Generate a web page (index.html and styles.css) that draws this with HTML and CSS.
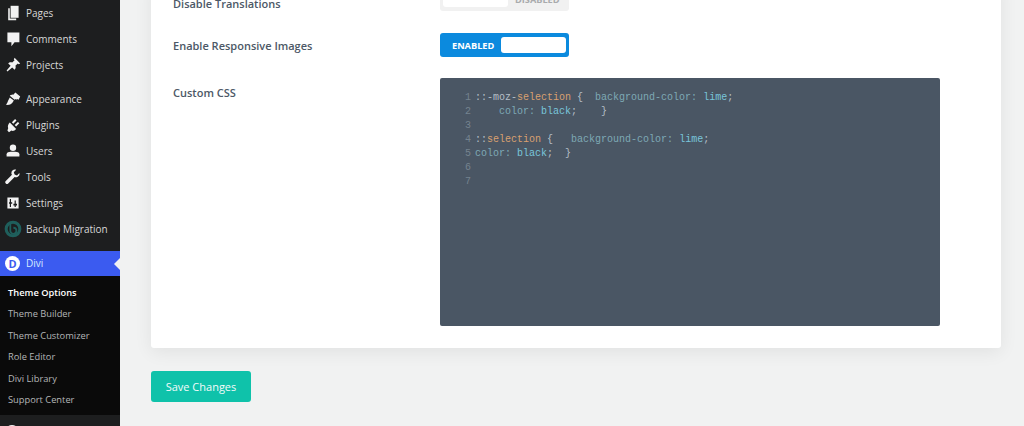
FILE: index.html
```html
<!DOCTYPE html>
<html lang="en">
<head>
<meta charset="utf-8">
<title>Divi Theme Options</title>
<link rel="stylesheet" href="styles.css">
</head>
<body>
<aside class="sidebar">
  <ul class="menu">
    <li class="item"><svg class="icon" viewBox="0 0 20 20"><path d="M7 1h10v15H7z"/><path d="M4 4h2v13h8v2H4z"/></svg>Pages</li>
    <li class="item"><svg class="icon" viewBox="0 0 20 20"><path d="M3 2h15v12h-6l-4 5v-5H3z"/></svg>Comments</li>
    <li class="item"><svg class="icon" viewBox="0 0 20 20"><path d="M12 1l7 7-2 1-1-1-3 3c1 2 0 4-1 5l-3-3-6 5-1-1 5-6-3-3c1-1 3-2 5-1l3-3-1-1z"/></svg>Projects</li>
    <li class="item gap-before"><svg class="icon" viewBox="0 0 20 20"><path d="M13 2l6 5-2 4-2-1-1 1-1-1-1 1-6-5 1-1 1 0 1-1 1 1zM6 8l5 4-2 3c-2 2-5 3-8 2 2-1 2-3 3-5z"/></svg>Appearance</li>
    <li class="item"><svg class="icon" viewBox="0 0 20 20"><path d="M6 7l8 8c-2 2-4 3-6 2l-3 2-2-2 1-3c-1-2 0-5 2-7z"/><path class="prong" d="M9.500 7.500l4-4M13 11l4-4"/></svg>Plugins</li>
    <li class="item"><svg class="icon" viewBox="0 0 20 20"><circle cx="10" cy="6" r="4"/><path d="M2 17v-3c0-2 3-3 5-3h6c2 0 5 1 5 3v3z"/></svg>Users</li>
    <li class="item"><svg class="icon" viewBox="0 0 20 20"><path d="M18 5l-3 3-3-1-1-3 3-3c-3-1-6 1-6 4 0 1 0 2 1 2l-8 8c-1 1-1 2 0 3s2 1 3 0l8-8c3 1 7-1 6-5z"/></svg>Tools</li>
    <li class="item"><svg class="icon" viewBox="0 0 20 20"><path fill-rule="evenodd" d="M3 3h14v14H3zM6 5v4H5v2h1v4h1.500v-4H9V9H7.500V5zm6 2v4h-1.500v2H12v2h1.500v-2H15v-2h-1.500V7z"/></svg>Settings</li>
    <li class="item"><svg class="icon icon-backup" viewBox="0 0 20 20"><circle cx="10" cy="10" r="7.6" fill="none" stroke="#1f5f5c" stroke-width="3.4"/><path d="M7 3v9a3.400 3.400 0 1 0 3.400-3.400" fill="none" stroke="#1f5f5c" stroke-width="2"/></svg>Backup Migration</li>
    <li class="item current"><span class="divi-logo">D</span>Divi</li>
  </ul>
  <ul class="submenu">
    <li class="sub-item sub-active">Theme Options</li>
    <li class="sub-item">Theme Builder</li>
    <li class="sub-item">Theme Customizer</li>
    <li class="sub-item">Role Editor</li>
    <li class="sub-item">Divi Library</li>
    <li class="sub-item">Support Center</li>
  </ul>
  <div class="item next-item"><span class="next-dot"></span>Collapse</div>
</aside>
<main class="main">
  <section class="card">
    <div class="row">
      <div class="label label-first">Disable Translations</div>
      <div class="toggle toggle-off"><span class="knob"></span><span class="state">DISABLED</span></div>
    </div>
    <div class="row">
      <div class="label">Enable Responsive Images</div>
      <div class="toggle toggle-on"><span class="state">ENABLED</span><span class="knob"></span></div>
    </div>
    <div class="row">
      <div class="label label-css">Custom CSS</div>
      <div class="editor">
        <div class="numbers"><div>1</div><div>2</div><div>3</div><div>4</div><div>5</div><div>6</div><div>7</div></div>
        <pre class="code"><span class="pn">::-moz-</span><span class="sel">selection</span> <span class="pn">{</span>  <span class="prop">background-color:</span> <span class="val">lime</span><span class="pn">;</span>
    <span class="prop">color:</span> <span class="val">black</span><span class="pn">;</span>    <span class="pn">}</span>

<span class="pn">::</span><span class="sel">selection</span> <span class="pn">{</span>   <span class="prop">background-color:</span> <span class="val">lime</span><span class="pn">;</span>
<span class="prop">color:</span> <span class="val">black</span><span class="pn">;</span>  <span class="pn">}</span></pre>
      </div>
    </div>
  </section>
  <button class="save" type="button">Save Changes</button>
</main>
</body>
</html>
```
FILE: styles.css
```css
* { box-sizing: border-box; }
html, body { margin: 0; padding: 0; height: 426px; overflow: hidden; }
body {
  display: flex;
  background: #f1f2f2;
  font-family: "Open Sans", sans-serif;
}
ul { list-style: none; margin: 0; padding: 0; }

.sidebar {
  flex: 0 0 120px;
  width: 120px;
  height: 426px;
  background: #1d1e1f;
  color: #d8d8d8;
  overflow: hidden;
}
.item {
  display: flex;
  align-items: center;
  height: 26px;
  padding-left: 5px;
  padding-bottom: 1px;
  font-size: 10px;
  white-space: nowrap;
}
.gap-before { margin-top: 8px; }
.icon {
  flex: none;
  width: 16px;
  height: 16px;
  margin-right: 5px;
  fill: #f2f2f2;
}
.prong { fill: none; stroke: #f2f2f2; stroke-width: 2.5; }
.icon-backup { width: 18px; height: 18px; margin-left: -1px; margin-right: 4px; }
.current {
  position: relative;
  height: 25px;
  margin-top: 9px;
  background: #3b5bf0;
  color: #d6ecff;
}
.current::after {
  content: "";
  position: absolute;
  right: 0;
  top: 7px;
  border: 6px solid transparent;
  border-right-color: #f1f2f2;
  border-left-width: 0;
}
.divi-logo {
  flex: none;
  width: 15px;
  height: 15px;
  margin-right: 6px;
  border-radius: 50%;
  background: #fff;
  color: #3b5bf0;
  font-size: 11px;
  font-weight: 700;
  line-height: 15px;
  text-align: center;
}
.submenu {
  height: 139px;
  padding-top: 6px;
  background: #0a0a0a;
}
.sub-item {
  height: 21.4px;
  padding-left: 8px;
  font-size: 9.3px;
  line-height: 21.4px;
  color: #b4b6b8;
  white-space: nowrap;
}
.sub-active { color: #fff; font-weight: 600; }
.next-item { color: #dcdcdc; padding-top: 8px; padding-bottom: 0; }
.next-dot {
  flex: none;
  width: 14px;
  height: 14px;
  margin-right: 7px;
  border-radius: 50%;
  background: #f2f2f2;
}

.main {
  flex: 1;
  min-width: 0;
  padding-left: 31px;
}
.card {
  width: 850px;
  margin-top: -20px;
  padding: 7px 61px 22px 22px;
  background: #fff;
  border-radius: 3px;
  box-shadow: 0 4px 18px rgba(0, 0, 0, 0.07);
}
.row {
  display: flex;
  margin-bottom: 22px;
}
.row:last-child { margin-bottom: 0; }
.label {
  flex: 0 0 267px;
  height: 24px;
  font-size: 11px;
  font-weight: 600;
  color: #4c5866;
  line-height: 26px;
}
.label-first { padding-top: 4px; }
.label-css { padding-top: 1px; }
.toggle {
  display: flex;
  align-items: center;
  width: 129px;
  height: 24px;
  border-radius: 3px;
  font-size: 9.2px;
  font-weight: 700;
}
.knob {
  flex: none;
  width: 65px;
  height: 16px;
  border-radius: 3px;
  background: #fff;
}
.toggle-off {
  padding-left: 3px;
  background: #f1f1f1;
  color: #a9abad;
}
.toggle-off .state { margin-left: 7px; }
.toggle-on {
  justify-content: space-between;
  padding: 0 3px 0 12px;
  background: #0b8ade;
  color: #fff;
}
.editor {
  display: flex;
  width: 500px;
  height: 248px;
  margin-top: -1px;
  padding-top: 13px;
  background: #4a5664;
  border-radius: 2px;
  font-family: "Liberation Mono", monospace;
  font-size: 10px;
  line-height: 14px;
}
.numbers {
  flex: 0 0 31px;
  text-align: right;
  color: #75838f;
}
.code {
  margin: 0 0 0 4px;
  font: inherit;
  color: #b9c2ca;
}
.pn { color: #b6bfc7; }
.sel { color: #d9a070; }
.prop { color: #7ea9b5; }
.val { color: #79c6dc; }

.save {
  display: block;
  width: 100px;
  height: 31px;
  margin-top: 23px;
  border: 0;
  border-radius: 3px;
  background: #0fc2aa;
  color: #f4fbfa;
  font-family: "Open Sans", sans-serif;
  font-size: 11px;
  font-weight: 500;
}
```
